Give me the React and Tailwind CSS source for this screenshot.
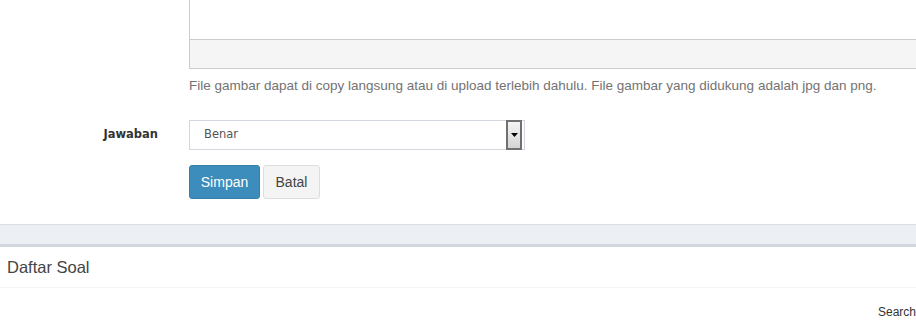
import React from 'react';

function App() {
  return (
    <div className="w-[916px] h-[333px] overflow-hidden bg-white font-['Liberation_Sans',Arial,sans-serif] text-[#333]">
      {/* form section */}
      <div className="h-[224px] flex flex-col">
        <div className="pl-[189px]">
          <div className="w-[760px] border-l border-b border-[#cccccc]">
            <div className="h-[40px] bg-white border-b border-[#cccccc]"></div>
            <div className="h-[28px] bg-[#f5f5f5]"></div>
          </div>
          <p className="mt-[7px] text-[13.5px] leading-[20px] text-[#737373]">
            File gambar dapat di copy langsung atau di upload terlebih dahulu. File gambar yang didukung adalah jpg dan png.
          </p>
        </div>

        <div className="flex items-center mt-[24px]">
          <label className="w-[189px] pr-[31px] text-right font-['DejaVu_Sans',sans-serif] font-bold text-[11.5px] text-[#333]">
            Jawaban
          </label>
          <div className="relative w-[336px] h-[30px] border border-[#d2d6de] bg-white flex items-center">
            <span className="pl-[14px] font-['DejaVu_Sans',sans-serif] text-[11.5px] text-[#555]">Benar</span>
            <div className="absolute right-[2px] top-[-1px] w-[16px] h-[30px] border-2 border-[#707070] bg-gradient-to-b from-[#f4f4f4] to-[#d4d4d4] flex items-center justify-center">
              <svg width="7" height="4" viewBox="0 0 7 4">
                <polygon points="0,0 7,0 3.5,4" fill="#000" />
              </svg>
            </div>
          </div>
        </div>

        <div className="flex gap-[3px] pl-[189px] mt-[15px]">
          <button className="h-[34px] w-[71px] rounded-[3px] bg-[#3c8dbc] border border-[#367fa9] text-white text-[14px]">
            Simpan
          </button>
          <button className="h-[34px] w-[57px] rounded-[3px] bg-[#f4f4f4] border border-[#dddddd] text-[#444] text-[14px]">
            Batal
          </button>
        </div>
      </div>

      {/* gap between boxes */}
      <div className="h-[20px] bg-[#ecf0f5] border-t border-[#dadee5]"></div>

      {/* list box */}
      <div className="border-t-[3px] border-[#d2d6de] bg-white">
        <div className="h-[41px] flex items-center pl-[7px] border-b border-[#f4f4f4]">
          <h3 className="text-[16.5px] text-[#444]">Daftar Soal</h3>
        </div>
        <div className="flex justify-end pt-[15px]">
          <span className="text-[12px] text-[#333]">Search</span>
        </div>
      </div>
    </div>
  );
}

export default App;
